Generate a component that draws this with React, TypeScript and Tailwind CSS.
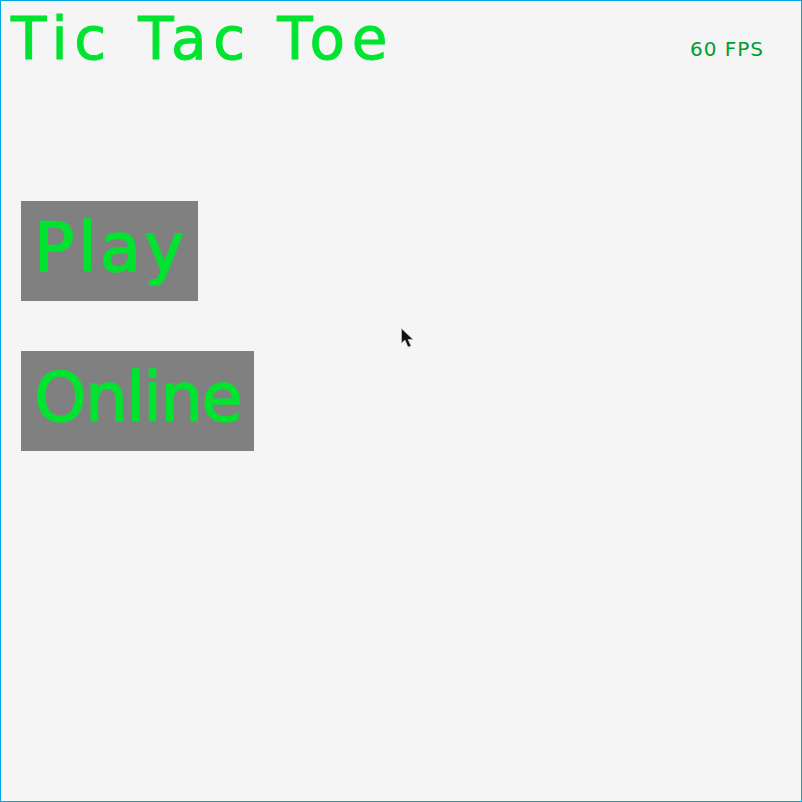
export default function App() {
  return (
    <div className="relative flex h-[802px] w-[802px] flex-col border border-[#00a8e1] bg-[#f5f5f5] font-['DejaVu_Sans',sans-serif]">
      {/* top bar */}
      <div className="flex h-[200px] items-start justify-between pl-[10px] pr-[37px]">
        <h1 className="mt-[4px] text-[58px] leading-[68px] tracking-[6.8px] text-[#00e430] [-webkit-text-stroke:1px_#00e430]">Tic Tac Toe</h1>
        <span className="mt-[36px] text-[20px] leading-[24px] tracking-[1px] text-[#009e2f]">60 FPS</span>
      </div>

      {/* menu */}
      <div className="flex flex-col items-start gap-[50px] pl-[20px]">
        <button className="flex h-[100px] w-[177px] items-center bg-[#808080] pb-[6px] pl-[13px] text-[67px] tracking-[3.5px] text-[#00e430] [-webkit-text-stroke:1.5px_#00e430]">
          Play
        </button>
        <button className="flex h-[100px] w-[233px] items-center bg-[#808080] pb-[6px] pl-[13px] text-[67px] tracking-[-1.5px] text-[#00e430] [-webkit-text-stroke:1.5px_#00e430]">
          Online
        </button>
      </div>

      {/* mouse pointer */}
      <svg className="absolute left-[399px] top-[326px]" width="15" height="21" viewBox="0 0 15 21">
        <path d="M1.5 1.5 L1.5 16 L5 13 L8 20 L11 19 L8 12.5 L13 12.5 Z" fill="#111" stroke="#bbb" strokeWidth="0.8" />
      </svg>
    </div>
  );
}
